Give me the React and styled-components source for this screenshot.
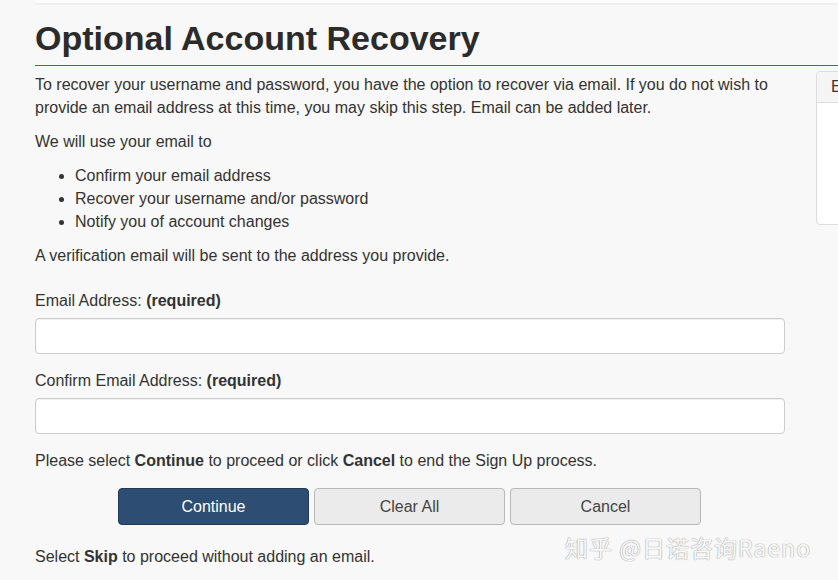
import React from "react";
import styled, { createGlobalStyle } from "styled-components";

const GlobalStyle = createGlobalStyle`
  html, body {
    margin: 0;
    padding: 0;
    background: #f8f8f8;
  }
  body {
    font-family: "Liberation Sans", Arial, sans-serif;
    color: #333;
    overflow: hidden;
  }
`;

const Page = styled.div`
  position: relative;
  width: 838px;
  height: 580px;
  overflow: hidden;
`;

const TopBar = styled.div`
  margin-left: 35px;
  height: 3px;
  background: #fdfdfd;
  box-shadow: 0 1px 3px rgba(0, 0, 0, 0.08);
`;

const Heading = styled.h1`
  margin: 15px 0 0 35px;
  padding-bottom: 7px;
  font-size: 34px;
  line-height: 40px;
  font-weight: bold;
  color: #2b2b2b;
  border-bottom: 1px solid #a04848;
`;

const Layout = styled.div`
  display: flex;
  align-items: flex-start;
  gap: 31px;
  padding-left: 35px;
  margin-top: 7px;
`;

const Main = styled.div`
  width: 750px;
  flex-shrink: 0;
  font-size: 16px;
  line-height: 23px;
`;

const Para = styled.p`
  margin: 0 0 ${(p) => p.$gap ?? 11}px;
`;

const List = styled.ul`
  margin: 0 0 11px;
  padding-left: 40px;
`;

const Label = styled.label`
  display: block;
  margin-bottom: 6px;
`;

const Input = styled.input`
  display: block;
  box-sizing: border-box;
  width: 100%;
  height: 36px;
  margin-bottom: ${(p) => p.$mb}px;
  border: 1px solid #cccccc;
  border-radius: 4px;
  background: #fff;
  box-shadow: inset 0 1px 1px rgba(0, 0, 0, 0.06);
`;

const Buttons = styled.div`
  display: flex;
  gap: 5px;
  padding-left: 83px;
  margin: 16px 0 20px;
`;

const Button = styled.button`
  width: 191px;
  height: 37px;
  font-family: "Liberation Sans", Arial, sans-serif;
  font-size: 16px;
  border-radius: 4px;
  border: 1px solid ${(p) => (p.$primary ? "#223a58" : "#b8b8b8")};
  background: ${(p) => (p.$primary ? "#2e4d72" : "#ebebeb")};
  color: ${(p) => (p.$primary ? "#fff" : "#444")};
`;

const Side = styled.div`
  flex-shrink: 0;
  width: 80px;
  height: 152px;
  margin-top: -2px;
  border: 1px solid #dddddd;
  border-radius: 4px;
  background: #fff;
  overflow: hidden;
`;

const SideHead = styled.div`
  height: 30px;
  padding: 0 14px;
  font-size: 16px;
  line-height: 30px;
  background: #f5f5f5;
  border-bottom: 1px solid #dddddd;
`;

const Watermark = styled.div`
  position: absolute;
  left: 565px;
  top: 530px;
  font-family: "Noto Sans CJK SC", sans-serif;
  font-size: 23px;
  letter-spacing: 1px;
  color: #fafafa;
  text-shadow: 0 0 1px #999, 0 0 1px #999;
`;

export default function App() {
  return (
    <Page>
      <GlobalStyle />
      <TopBar />
      <Heading>Optional Account Recovery</Heading>
      <Layout>
        <Main>
          <Para>
            To recover your username and password, you have the option to recover via email. If you do not wish to
            provide an email address at this time, you may skip this step. Email can be added later.
          </Para>
          <Para>We will use your email to</Para>
          <List>
            <li>Confirm your email address</li>
            <li>Recover your username and/or password</li>
            <li>Notify you of account changes</li>
          </List>
          <Para $gap={22}>A verification email will be sent to the address you provide.</Para>
          <Label>
            Email Address: <b>(required)</b>
          </Label>
          <Input $mb={15} />
          <Label>
            Confirm Email Address: <b>(required)</b>
          </Label>
          <Input $mb={15} />
          <Para $gap={0}>
            Please select <b>Continue</b> to proceed or click <b>Cancel</b> to end the Sign Up process.
          </Para>
          <Buttons>
            <Button $primary>Continue</Button>
            <Button>Clear All</Button>
            <Button>Cancel</Button>
          </Buttons>
          <Para>
            Select <b>Skip</b> to proceed without adding an email.
          </Para>
        </Main>
        <Side>
          <SideHead>E</SideHead>
        </Side>
      </Layout>
      <Watermark>知乎 @日诺咨询Raeno</Watermark>
    </Page>
  );
}
